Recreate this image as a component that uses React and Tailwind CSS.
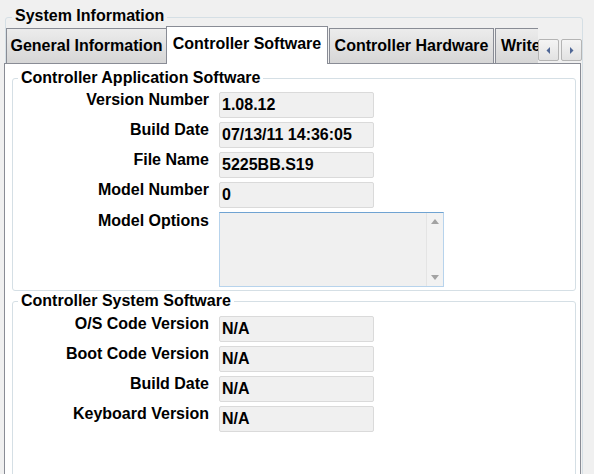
const Group = ({ title, className = '', children }) => (
  <div className={`relative border border-[#d5dfe5] rounded-[3px] ${className}`}>
    <span className="absolute left-[5px] top-[-10px] bg-white px-[3px] leading-[18px] whitespace-nowrap">
      {title}
    </span>
    {children}
  </div>
)

const Field = ({ label, value }) => (
  <>
    <div className="text-right leading-[16px] whitespace-nowrap">{label}</div>
    <div className="h-[26px] w-[155px] border border-[#dadada] rounded-[2px] bg-[#f0f0f0] pl-[2px] flex items-center leading-none">
      {value}
    </div>
  </>
)

const Tab = ({ children, active, className = '' }) =>
  active ? (
    <div className={`relative h-[38px] bg-white border-l border-t border-r border-[#898c95] flex items-center justify-center pb-[3px] whitespace-nowrap ${className}`}>
      {children}
    </div>
  ) : (
    <div className={`mt-[2px] h-[35px] bg-linear-to-b from-[#ececec] to-[#d6d6d6] border-l border-t border-r border-[#898c95] flex items-center justify-center whitespace-nowrap ${className}`}>
      {children}
    </div>
  )

const ScrollBtn = ({ dir }) => (
  <div className="w-[21px] h-[22px] border border-[#b4b4b4] rounded-[2px] bg-linear-to-b from-[#f4f4f4] to-[#e2e2e2] flex items-center justify-center">
    <svg width="5" height="7" viewBox="0 0 5 7">
      {dir === 'left' ? (
        <polygon points="4,0 4,7 0.5,3.5" fill="#4f6796" />
      ) : (
        <polygon points="1,0 1,7 4.5,3.5" fill="#4f6796" />
      )}
    </svg>
  </div>
)

export default function App() {
  return (
    <div className="w-[594px] h-[474px] overflow-hidden bg-[#f0f0f0] pt-[17px] pl-[5px] font-['Liberation_Sans',Arial,sans-serif] font-bold text-[16px] text-black">
      <div className="relative w-[578px] h-[480px] border border-[#d5dfe5] rounded-[3px]">
        <span className="absolute left-[6px] top-[-11px] bg-[#f0f0f0] px-[3px] leading-[18px]">
          System Information
        </span>

        <div className="relative z-10 mt-[8px] w-[532px] h-[38px] overflow-hidden flex items-start">
          <Tab className="w-[161px] shrink-0">General Information</Tab>
          <Tab active className="w-[162px] shrink-0 ml-[-1px]">Controller Software</Tab>
          <Tab className="w-[165px] shrink-0 ml-[1px]">Controller Hardware</Tab>
          <Tab className="w-[120px] shrink-0 ml-[1px] justify-start pl-[5px]">Write Options</Tab>
        </div>

        <div className="absolute left-[532px] top-[21px] flex gap-[2px]">
          <ScrollBtn dir="left" />
          <ScrollBtn dir="right" />
        </div>

        <div className="mt-[-1px] ml-[-2px] w-[577px] h-[430px] bg-white border-l border-t border-r border-[#898c95] pt-[14px] pl-[7px]">
          <Group title="Controller Application Software" className="w-[564px] h-[213px] pt-[13px]">
            <div className="grid grid-cols-[196px_auto] gap-x-[10px] gap-y-[4px] items-start">
              <Field label="Version Number" value="1.08.12" />
              <Field label="Build Date" value="07/13/11 14:36:05" />
              <Field label="File Name" value="5225BB.S19" />
              <Field label="Model Number" value="0" />
              <div className="text-right leading-[16px] pt-[1px]">Model Options</div>
              <div className="w-[225px] h-[75px] border border-[#b7d3ec] border-t-[#6fa3d2] bg-[#f0f0f0] flex justify-end">
                <div className="w-[17px] h-full bg-[#f2f2f2] border-l border-[#e4e4e4] flex flex-col items-center justify-between py-[6px]">
                  <svg width="8" height="5" viewBox="0 0 8 5">
                    <polygon points="0,5 8,5 4,0" fill="#a3a3a3" />
                  </svg>
                  <svg width="8" height="5" viewBox="0 0 8 5">
                    <polygon points="0,0 8,0 4,5" fill="#a3a3a3" />
                  </svg>
                </div>
              </div>
            </div>
          </Group>

          <Group title="Controller System Software" className="mt-[10px] w-[564px] h-[200px] pt-[14px]">
            <div className="grid grid-cols-[196px_auto] gap-x-[10px] gap-y-[4px] items-start">
              <Field label="O/S Code Version" value="N/A" />
              <Field label="Boot Code Version" value="N/A" />
              <Field label="Build Date" value="N/A" />
              <Field label="Keyboard Version" value="N/A" />
            </div>
          </Group>
        </div>
      </div>
    </div>
  )
}
